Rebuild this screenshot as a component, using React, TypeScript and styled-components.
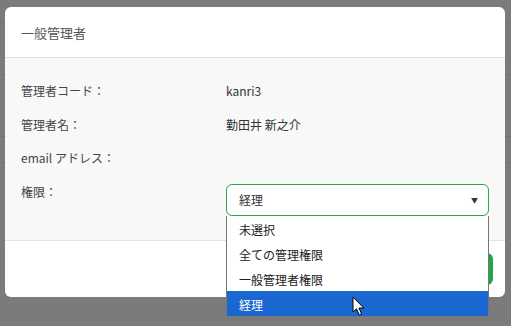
import React from "react"
import styled, { createGlobalStyle } from "styled-components"

const GlobalStyle = createGlobalStyle`
  html, body {
    margin: 0;
    padding: 0;
    background: #7b7b7b;
    font-family: "Noto Sans CJK JP", "Noto Sans", sans-serif;
  }
`

const Screen = styled.div`
  position: relative;
  width: 511px;
  height: 326px;
  overflow: hidden;
  background: #7b7b7b;
`

// faint page behind the overlay
const BackPage = styled.div`
  display: flex;
  flex-direction: column;
`

const BackLine = styled.div<{ $h: number }>`
  height: ${(p) => p.$h}px;
  border-bottom: 1px solid #717171;
`

const Modal = styled.div`
  position: absolute;
  left: 5px;
  top: 7px;
  width: 500px;
  border-radius: 6px;
  background: #ffffff;
  display: flex;
  flex-direction: column;
`

const Header = styled.div`
  height: 50px;
  display: flex;
  align-items: center;
  padding: 0 16px;
  border-bottom: 1px solid #e2e2e2;
  font-size: 13px;
  color: #555555;
`

const Body = styled.div`
  position: relative;
  background: #f8f8f8;
  padding: 24px 16px 24px 16px;
  border-bottom: 1px solid #dfe2e6;
  display: flex;
  flex-direction: column;
`

const Row = styled.div<{ $h: number }>`
  display: grid;
  grid-template-columns: 205px 1fr;
  align-items: start;
  height: ${(p) => p.$h}px;
  font-size: 12px;
  line-height: 18px;
  color: #333333;
`

const Label = styled.div`
  color: #444444;
`

const Value = styled.div``

const SelectBox = styled.div`
  margin-top: 1px;
  height: 30px;
  border: 1px solid #2ba84a;
  border-radius: 6px;
  background: #ffffff;
  display: flex;
  align-items: center;
  justify-content: space-between;
  padding: 0 10px 0 12px;
  font-size: 12px;
  color: #333333;
`

const Caret = styled.span`
  font-size: 7px;
  color: #333333;
`

const Footer = styled.div`
  height: 56px;
  display: flex;
  align-items: center;
  justify-content: flex-end;
  padding: 0 12px;
`

const Button = styled.div`
  width: 70px;
  height: 32px;
  border-radius: 6px;
  background: #1fa64a;
`

const Dropdown = styled.ul`
  position: absolute;
  left: 221px;
  top: 158px;
  width: 261px;
  margin: 0;
  padding: 0;
  list-style: none;
  background: #ffffff;
  border: 1px solid #767676;
  border-top: none;
`

const Option = styled.li<{ $active?: boolean }>`
  height: 25px;
  display: flex;
  align-items: center;
  padding: 1px 0 0 12px;
  box-sizing: border-box;
  font-size: 12px;
  color: ${(p) => (p.$active ? "#ffffff" : "#222222")};
  background: ${(p) => (p.$active ? "#1a67d2" : "transparent")};
`

const Cursor = styled.svg`
  position: absolute;
  left: 352px;
  top: 296px;
`

const options = ["未選択", "全ての管理権限", "一般管理者権限", "経理"]

export default function App() {
  return (
    <Screen>
      <GlobalStyle />
      <BackPage>
        <BackLine $h={22} />
        <BackLine $h={51} />
        <BackLine $h={61} />
        <BackLine $h={25} />
      </BackPage>
      <Modal>
        <Header>一般管理者</Header>
        <Body>
          <Row $h={34}>
            <Label>管理者コード：</Label>
            <Value>kanri3</Value>
          </Row>
          <Row $h={33}>
            <Label>管理者名：</Label>
            <Value>勤田井 新之介</Value>
          </Row>
          <Row $h={34}>
            <Label>email アドレス：</Label>
            <Value></Value>
          </Row>
          <Row $h={33}>
            <Label>権限：</Label>
            <SelectBox>
              経理
              <Caret>▼</Caret>
            </SelectBox>
          </Row>
          <Dropdown>
            {options.map((o) => (
              <Option key={o} $active={o === "経理"}>
                {o}
              </Option>
            ))}
          </Dropdown>
        </Body>
        <Footer>
          <Button />
        </Footer>
      </Modal>
      <Cursor width="14" height="22" viewBox="0 0 14 22">
        <path
          d="M1 1 L1 16 L4.5 12.8 L7.2 19 L9.6 18 L7 12 L11.8 12 Z"
          fill="#ffffff"
          stroke="#000000"
          strokeWidth="1"
          strokeLinejoin="round"
        />
      </Cursor>
    </Screen>
  )
}
